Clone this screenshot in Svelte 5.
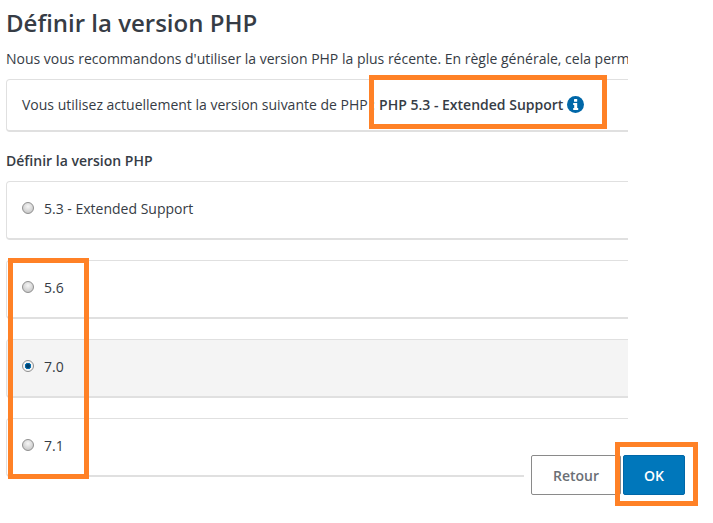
<script>
  let selected = "7.0";
  const versions = ["5.6", "7.0", "7.1"];
</script>

<div class="page">
  <main class="content">
    <h1>Définir la version PHP</h1>
    <p class="intro">Nous vous recommandons d'utiliser la version PHP la plus récente. En règle générale, cela permet d'améliorer les performances.</p>

    <div class="card current">
      <span>Vous utilisez actuellement la version suivante de PHP :</span>
      <strong>PHP 5.3 - Extended Support</strong>
      <svg class="info" viewBox="0 0 17 17" width="17" height="17" aria-hidden="true">
        <circle cx="8.5" cy="8.5" r="8.5" fill="#0067a8" />
        <rect x="7" y="3" width="3.2" height="2.8" rx="0.5" fill="#fff" />
        <path d="M6.2 7h4v5h1v2h-5v-2h1V9h-1z" fill="#fff" />
      </svg>
    </div>

    <h2>Définir la version PHP</h2>

    <label class="card option">
      <input type="radio" name="php" value="5.3" bind:group={selected} />
      5.3 - Extended Support
    </label>
    {#each versions as v}
      <label class="card option" class:active={selected === v}>
        <input type="radio" name="php" value={v} bind:group={selected} />
        {v}
      </label>
    {/each}
  </main>

  <div class="actions">
    <button class="back">Retour</button>
    <button class="ok">OK</button>
  </div>

  <div class="mark mark-current"></div>
  <div class="mark mark-versions"></div>
  <div class="mark mark-ok"></div>
</div>

<style>
  :global(body) {
    background: #fff;
  }
  .page {
    position: relative;
    width: 713px;
    height: 523px;
    overflow: hidden;
    font-family: "Open Sans", sans-serif;
    font-size: 14px;
    color: #363c45;
  }
  .content {
    width: 622px;
    margin-right: 85px;
    padding-left: 6px;
    overflow: hidden;
  }
  h1 {
    margin: 0;
    padding-top: 6px;
    font-size: 24px;
    line-height: 34px;
    font-weight: 600;
    white-space: nowrap;
  }
  .intro {
    margin: 9px 0 0;
    line-height: 20px;
    white-space: nowrap;
  }
  .card {
    box-sizing: border-box;
    display: flex;
    align-items: center;
    width: 720px;
    border: 1px solid #e0e0e0;
    border-bottom-width: 2px;
    border-radius: 4px;
    background: #fff;
  }
  .current {
    height: 53px;
    margin-top: 10px;
    padding: 0 0 1px 15px;
    gap: 4px;
    white-space: nowrap;
  }
  .current strong {
    font-weight: 600;
  }
  .info {
    flex: none;
  }
  h2 {
    margin: 19px 0 11px;
    font-size: 14px;
    line-height: 19px;
    font-weight: 600;
  }
  .option {
    height: 59px;
    margin-bottom: 20px;
    padding: 0 0 4px 15px;
    gap: 10px;
  }
  .option.active {
    background: #f4f4f4;
  }
  input {
    appearance: none;
    box-sizing: border-box;
    width: 12px;
    height: 12px;
    margin: 0;
    border: 1px solid #8f8f8f;
    border-radius: 50%;
    background: radial-gradient(circle at 50% 35%, #f6f6f6, #bdbdbd);
  }
  input:checked {
    background: radial-gradient(circle, #003f6b 0 1.5px, #0a78bb 3px, #f4f4f4 3.5px);
  }
  .actions {
    position: absolute;
    left: 524px;
    top: 455px;
    display: flex;
    gap: 2px;
    padding-left: 7px;
    background: #fff;
  }
  button {
    box-sizing: border-box;
    height: 40px;
    border-radius: 2px;
    font-family: inherit;
    font-size: 14px;
    font-weight: 600;
  }
  .back {
    width: 90px;
    border: 1px solid #8a8a8a;
    background: #fff;
    color: #6b6f75;
  }
  .ok {
    width: 62px;
    border: 1px solid #0067a8;
    background: #0077bb;
    color: #fff;
  }
  .mark {
    position: absolute;
    box-sizing: border-box;
    border: 5px solid #ff8126;
  }
  .mark-current {
    left: 369px;
    top: 75px;
    width: 238px;
    height: 54px;
  }
  .mark-versions {
    left: 8px;
    top: 258px;
    width: 81px;
    height: 221px;
  }
  .mark-ok {
    left: 615px;
    top: 442px;
    width: 83px;
    height: 64px;
  }
</style>
